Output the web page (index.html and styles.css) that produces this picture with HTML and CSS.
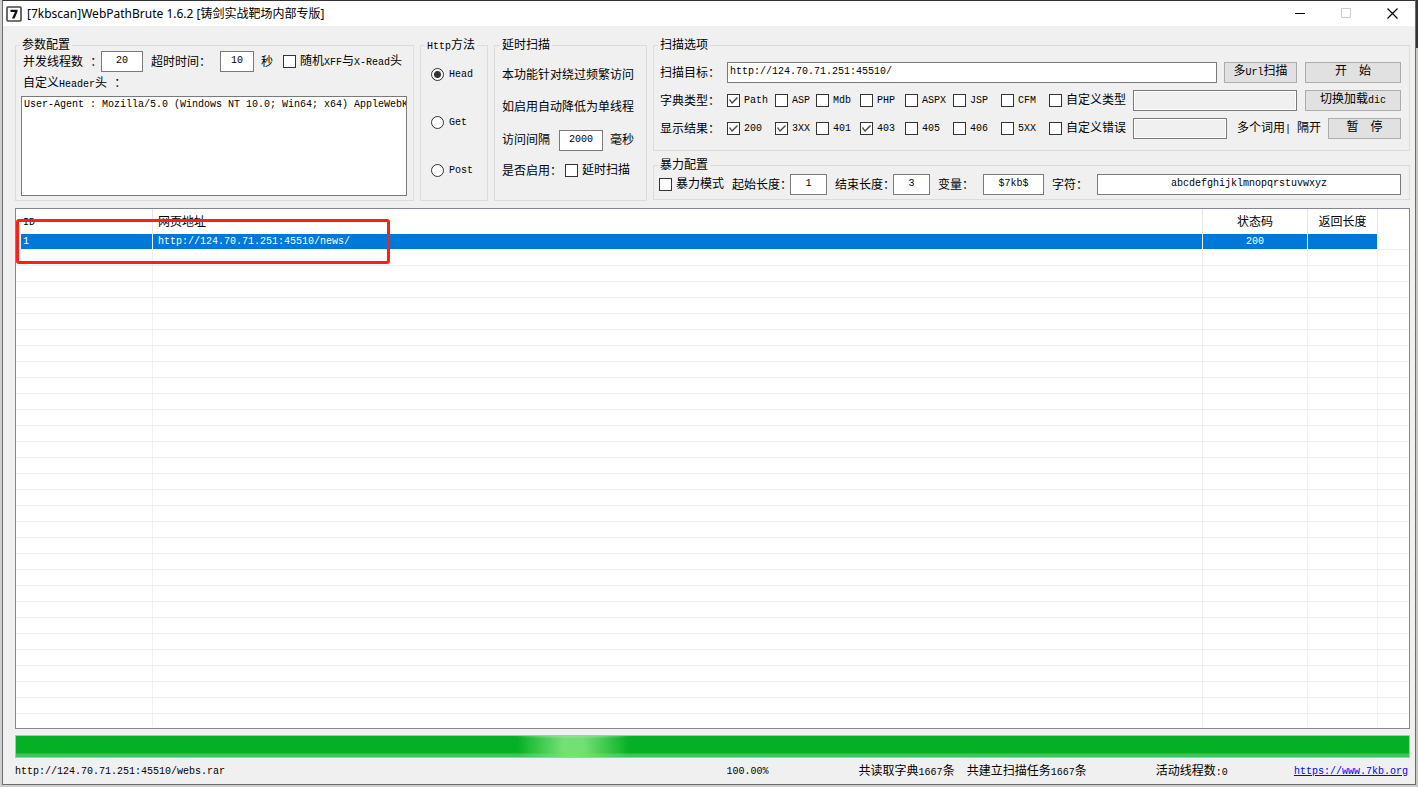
FILE: index.html
```html
<!DOCTYPE html>
<html lang="zh-CN">
<head>
<meta charset="utf-8">
<title>WebPathBrute</title>
<link rel="stylesheet" href="styles.css">
</head>
<body>
<div class="window">
  <header class="titlebar">
    <svg class="app-icon" width="16" height="16" viewBox="0 0 16 16" aria-hidden="true">
      <rect x="1" y="1" width="14" height="14" rx="1" fill="#fff" stroke="#444" stroke-width="1.6"/>
      <path d="M4.5 3.8h7v2L8.6 12.4H5.9L9 6H4.5z" fill="#111"/>
    </svg>
    <h1 class="title">[7kbscan]WebPathBrute 1.6.2 [铸剑实战靶场内部专版]</h1>
    <button class="win-btn" aria-label="最小化"><svg width="11" height="11" viewBox="0 0 11 11"><path d="M0 5.5h10" stroke="#000"/></svg></button>
    <button class="win-btn" aria-label="最大化" disabled><svg width="11" height="11" viewBox="0 0 11 11"><path d="M.5.5h9v9h-9z" fill="none" stroke="#ccc"/></svg></button>
    <button class="win-btn" aria-label="关闭"><svg width="11" height="11" viewBox="0 0 11 11"><path d="M.5.5l10 10M10.5.5l-10 10" stroke="#000" stroke-width="1.2"/></svg></button>
  </header>

  <main class="content">
    <div class="panels">
      <fieldset class="panel params">
        <legend>参数配置</legend>
        <div class="row params-row">
          <label class="threads-label" for="threads">并发线程数 ：</label>
          <input class="box center threads" id="threads" type="text" value="20">
          <label class="timeout-label" for="timeout">超时时间：</label>
          <input class="box center timeout" id="timeout" type="text" value="10">
          <span class="unit">秒</span>
          <label class="check"><input type="checkbox"><span>随机<span class="en">XFF</span>与<span class="en">X-Read</span>头</span></label>
        </div>
        <label class="header-label" for="headers">自定义<span class="en">Header</span>头 ：</label>
        <textarea class="headers" id="headers" wrap="off">User-Agent : Mozilla/5.0 (Windows NT 10.0; Win64; x64) AppleWebKit/537.36</textarea>
      </fieldset>

      <fieldset class="panel method">
        <legend><span class="en">Http</span>方法</legend>
        <label class="check en"><input type="radio" name="method" checked><span>Head</span></label>
        <label class="check en"><input type="radio" name="method"><span>Get</span></label>
        <label class="check en"><input type="radio" name="method"><span>Post</span></label>
      </fieldset>

      <fieldset class="panel delay">
        <legend>延时扫描</legend>
        <div class="delay-rows">
          <p>本功能针对绕过频繁访问</p>
          <p>如启用自动降低为单线程</p>
          <div class="row">
            <label class="interval-label" for="interval">访问间隔</label>
            <input class="box center interval" id="interval" type="text" value="2000">
            <span class="unit">毫秒</span>
          </div>
          <div class="row">
            <span class="enable-label">是否启用：</span>
            <label class="check"><input type="checkbox"><span>延时扫描</span></label>
          </div>
        </div>
      </fieldset>

      <div class="right">
        <fieldset class="panel scan">
          <legend>扫描选项</legend>
          <div class="row">
            <label class="name" for="target">扫描目标：</label>
            <input class="box grow" id="target" type="text" value="http://124.70.71.251:45510/">
            <button class="btn medium">多<span class="en">Url</span>扫描</button>
            <button class="btn wide">开<span class="en">&nbsp;&nbsp;</span>始</button>
          </div>
          <div class="row">
            <span class="name">字典类型：</span>
            <div class="checks">
              <label class="check en"><input type="checkbox" checked><span>Path</span></label>
              <label class="check en"><input type="checkbox"><span>ASP</span></label>
              <label class="check en"><input type="checkbox"><span>Mdb</span></label>
              <label class="check en"><input type="checkbox"><span>PHP</span></label>
              <label class="check en"><input type="checkbox"><span>ASPX</span></label>
              <label class="check en"><input type="checkbox"><span>JSP</span></label>
              <label class="check en"><input type="checkbox"><span>CFM</span></label>
              <label class="check"><input type="checkbox"><span>自定义类型</span></label>
            </div>
            <input class="box grow" type="text" aria-label="自定义类型" disabled>
            <button class="btn wide">切换加载<span class="en">dic</span></button>
          </div>
          <div class="row">
            <span class="name">显示结果：</span>
            <div class="checks">
              <label class="check en"><input type="checkbox" checked><span>200</span></label>
              <label class="check en"><input type="checkbox" checked><span>3XX</span></label>
              <label class="check en"><input type="checkbox"><span>401</span></label>
              <label class="check en"><input type="checkbox" checked><span>403</span></label>
              <label class="check en"><input type="checkbox"><span>405</span></label>
              <label class="check en"><input type="checkbox"><span>406</span></label>
              <label class="check en"><input type="checkbox"><span>5XX</span></label>
              <label class="check"><input type="checkbox"><span>自定义错误</span></label>
            </div>
            <input class="box grow" type="text" aria-label="自定义错误" disabled>
            <span class="hint">多个词用<span class="en">| </span>隔开</span>
            <button class="btn medium">暂<span class="en">&nbsp;&nbsp;</span>停</button>
          </div>
        </fieldset>

        <fieldset class="panel brute">
          <legend>暴力配置</legend>
          <div class="row">
            <label class="check brute-check"><input type="checkbox"><span>暴力模式</span></label>
            <label class="len-label" for="minlen">起始长度：</label>
            <input class="box center len" id="minlen" type="text" value="1">
            <label class="len-label" for="maxlen">结束长度：</label>
            <input class="box center len" id="maxlen" type="text" value="3">
            <label class="short-label" for="variable">变量：</label>
            <input class="box center variable" id="variable" type="text" value="$7kb$">
            <label class="short-label" for="chars">字符：</label>
            <input class="box center grow" id="chars" type="text" value="abcdefghijklmnopqrstuvwxyz">
          </div>
        </fieldset>
      </div>
    </div>

    <section class="results">
      <table>
        <colgroup><col class="c-id"><col><col class="c-code"><col class="c-len"><col class="c-rest"></colgroup>
        <thead>
          <tr><th><span class="en">ID</span></th><th>网页地址</th><th class="mid">状态码</th><th class="mid">返回长度</th><th></th></tr>
        </thead>
        <tbody>
          <tr class="selected"><td>1</td><td>http://124.70.71.251:45510/news/</td><td class="mid">200</td><td></td><td></td></tr>
          <tr><td></td><td></td><td></td><td></td><td></td></tr>
          <tr><td></td><td></td><td></td><td></td><td></td></tr>
          <tr><td></td><td></td><td></td><td></td><td></td></tr>
          <tr><td></td><td></td><td></td><td></td><td></td></tr>
          <tr><td></td><td></td><td></td><td></td><td></td></tr>
          <tr><td></td><td></td><td></td><td></td><td></td></tr>
          <tr><td></td><td></td><td></td><td></td><td></td></tr>
          <tr><td></td><td></td><td></td><td></td><td></td></tr>
          <tr><td></td><td></td><td></td><td></td><td></td></tr>
          <tr><td></td><td></td><td></td><td></td><td></td></tr>
          <tr><td></td><td></td><td></td><td></td><td></td></tr>
          <tr><td></td><td></td><td></td><td></td><td></td></tr>
          <tr><td></td><td></td><td></td><td></td><td></td></tr>
          <tr><td></td><td></td><td></td><td></td><td></td></tr>
          <tr><td></td><td></td><td></td><td></td><td></td></tr>
          <tr><td></td><td></td><td></td><td></td><td></td></tr>
          <tr><td></td><td></td><td></td><td></td><td></td></tr>
          <tr><td></td><td></td><td></td><td></td><td></td></tr>
          <tr><td></td><td></td><td></td><td></td><td></td></tr>
          <tr><td></td><td></td><td></td><td></td><td></td></tr>
          <tr><td></td><td></td><td></td><td></td><td></td></tr>
          <tr><td></td><td></td><td></td><td></td><td></td></tr>
          <tr><td></td><td></td><td></td><td></td><td></td></tr>
          <tr><td></td><td></td><td></td><td></td><td></td></tr>
          <tr><td></td><td></td><td></td><td></td><td></td></tr>
          <tr><td></td><td></td><td></td><td></td><td></td></tr>
          <tr><td></td><td></td><td></td><td></td><td></td></tr>
          <tr><td></td><td></td><td></td><td></td><td></td></tr>
          <tr><td></td><td></td><td></td><td></td><td></td></tr>
          <tr><td></td><td></td><td></td><td></td><td></td></tr>
        </tbody>
      </table>
      <div class="highlight"></div>
    </section>

    <div class="progress" role="progressbar" aria-valuenow="100" aria-label="扫描进度"></div>

    <footer class="status">
      <span class="en">http://124.70.71.251:45510/webs.rar</span>
      <span class="en">100.00%</span>
      <span>共读取字典<span class="en">1667</span>条</span>
      <span>共建立扫描任务<span class="en">1667</span>条</span>
      <span>活动线程数<span class="en">:0</span></span>
      <a class="en" href="https://www.7kb.org">https://www.7kb.org</a>
    </footer>
  </main>
</div>
</body>
</html>
```
FILE: styles.css
```css
* { box-sizing: border-box; }

body {
  margin: 0;
  min-height: 100vh;
  display: flex;
  padding: 0 2px 2px;
  background: linear-gradient(#333 48px, #c8c8c4 48px) right / 2px 100% no-repeat, #cfcfcf;
  color: #000;
  font: 12px/14px "Liberation Mono", "Noto Sans CJK SC", monospace;
}

p { margin: 0; padding-top: 2px; }

.en, .box, .headers, td {
  font-family: "Liberation Mono", "Noto Sans CJK SC", monospace;
  font-size: 10px;
}

.window {
  flex: 1;
  min-width: 0;
  display: flex;
  flex-direction: column;
  background: #f0f0f0;
  border: 1px solid #6b6b6b;
  border-top-color: #333;
}

/* Title bar */
.titlebar {
  display: flex;
  align-items: center;
  height: 25px;
  padding-left: 3px;
  background: #fff;
}
.title {
  flex: 1;
  margin: 0 0 0 5px;
  font: 12px/16px "Noto Sans", "Noto Sans CJK SC", sans-serif;
  white-space: nowrap;
}
.win-btn {
  display: flex;
  align-items: center;
  justify-content: center;
  width: 46px;
  height: 25px;
  padding: 0;
  border: 0;
  background: none;
}

.content {
  flex: 1;
  display: flex;
  flex-direction: column;
  padding: 13px 5px 0 12px;
}

/* Option panels */
.panels { display: flex; gap: 6px; }
.panel {
  min-width: 0;
  margin: 0;
  padding: 0 8px;
  border: 1px solid #dcdcdc;
}
legend {
  height: 12px;
  margin-left: -1px;
  padding: 0 2px;
  line-height: 14px;
  white-space: nowrap;
}
.row { display: flex; align-items: center; white-space: nowrap; }
.row > label, .row > span { padding-top: 2px; }
.row > .check { padding-top: 0; }
.check > span { padding-top: 1px; }
.right { flex: 1; min-width: 0; display: flex; flex-direction: column; gap: 8px; }
.grow { flex: 1; min-width: 0; }

.box {
  height: 21px;
  padding: 0 2px 2px;
  border: 1px solid #7a7a7a;
  background: #fff;
  color: #000;
}
.box:disabled { background: #f0f0f0; box-shadow: inset 0 0 0 1px #fff; }
.center { text-align: center; }

.check { display: flex; align-items: center; gap: 4px; white-space: nowrap; }
.check input {
  appearance: none;
  flex: none;
  width: 13px;
  height: 13px;
  margin: 0;
  border: 1px solid #333;
  background: #fff;
}
.check input[type="checkbox"]:checked::before {
  content: "";
  display: block;
  width: 11px;
  height: 11px;
  background: #444;
  clip-path: polygon(1px 5px, 2px 4px, 4px 7px, 9px 2px, 10px 3px, 4px 9px);
}
.check input[type="radio"] { border-radius: 50%; }
.check input[type="radio"]:checked {
  background: radial-gradient(circle, #333 3px, #fff 4px);
}

.params { width: 399px; padding: 0 6px 4px 5px; }
.params-row { padding-left: 2px; }
.threads-label { width: 78px; }
.threads { width: 42px; }
.timeout-label { width: 77px; padding-left: 8px; }
.timeout { width: 34px; }
.unit { padding: 0 7px; }
.params .unit { width: 29px; }
.header-label { display: block; padding: 5px 0 4px 2px; }
.headers {
  display: block;
  width: 100%;
  height: 100px;
  padding: 2px;
  border: 1px solid #7a7a7a;
  background: #fff;
  color: #000;
  line-height: 12px;
  resize: none;
  overflow: hidden;
  white-space: pre;
}

.method { width: 68px; padding: 16px 0 0 10px; }
.method legend { margin-left: -6px; }
.method .check { height: 14px; margin-bottom: 34px; gap: 5px; }
.method .check:last-child { margin-bottom: 0; }

.delay { width: 153px; padding: 8px 0 0 7px; }
.delay legend { margin-left: -2px; }
.delay-rows {
  display: grid;
  grid-template-rows: 32px 32px 34px 27px;
  align-items: center;
  white-space: nowrap;
}
.interval-label { width: 57px; }
.interval { width: 44px; }
.enable-label { width: 63px; }

.scan {
  display: grid;
  grid-template-columns: minmax(0, 1fr);
  gap: 7px;
  padding: 11px 8px 11px 6px;
}
.scan legend, .brute legend { margin-left: -2px; }
.brute legend { margin-left: -1px; }
.name { width: 67px; }
.checks { display: grid; grid-template-columns: 48px 41px 44px 45px 48px 48px 48px 84px; }
.btn {
  height: 21px;
  padding: 0;
  border: 1px solid #adadad;
  background: #e1e1e1;
  color: #000;
  font: inherit;
  line-height: 19px;
}
.medium { width: 73px; margin-left: 7px; }
.wide { width: 96px; margin-left: 8px; }
.hint { padding-left: 10px; }

.brute { padding: 3px 8px 4px 5px; }
.brute-check { width: 65px; }
.len-label { width: 66px; padding-left: 8px; }
.len { width: 37px; }
.short-label { width: 53px; padding-left: 8px; }
.variable { width: 61px; }

/* Result list */
.results {
  position: relative;
  flex: 1;
  margin-top: 7px;
  border: 1px solid #828790;
  background: #fff;
}
table { width: 100%; border-collapse: separate; border-spacing: 0; table-layout: fixed; }
.c-id { width: 137px; }
.c-code { width: 105px; }
.c-len { width: 70px; }
.c-rest { width: 31px; }
th {
  height: 25px;
  padding: 2px 5px 0;
  border-right: 1px solid #e5e5e5;
  font-weight: normal;
  text-align: left;
}
td {
  height: 16px;
  padding: 0 5px;
  border-right: 1px solid #f0f0f0;
  border-bottom: 1px solid #f0f0f0;
  line-height: 15px;
}
th:first-child, td:first-child { padding-left: 7px; }
th:last-child, td:last-child { border-right: 0; }
tr:last-child td { height: 13px; border-bottom: 0; }
.mid { text-align: center; }
.selected td { background: #0078d7; background-clip: padding-box; color: #fff; }
.selected td:first-child { background: linear-gradient(90deg, #fff 5px, #0078d7 5px) padding-box; }
.selected td:last-child { background: #fff; }
.highlight {
  position: absolute;
  left: 0;
  top: 10px;
  width: 374px;
  height: 45px;
  border: 3px solid #ff2015;
  border-radius: 3px;
}

/* Progress and status */
.progress {
  height: 23px;
  margin-top: 6px;
  border: 1px solid #bcbcbc;
  background:
    radial-gradient(ellipse 60px 3px at 40% 0, #8fe68f, transparent) no-repeat,
    radial-gradient(ellipse 56px 60px at 40% 50%, #72e072 20%, transparent) no-repeat,
    linear-gradient(transparent 17px, #3fc35a 18px),
    #06b025;
}
.status {
  display: grid;
  grid-template-columns: 711fr 132fr 108fr 189fr 138fr 116fr;
  align-items: center;
  height: 26px;
  padding-top: 2px;
  white-space: nowrap;
}
.status a { color: #00f; }
```
